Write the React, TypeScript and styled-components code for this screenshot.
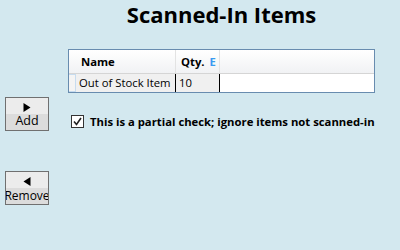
import React from "react";
import styled, { createGlobalStyle } from "styled-components";

const Global = createGlobalStyle`
  html, body { margin: 0; padding: 0; }
  body {
    background: #d3e8ef;
    font-family: "Open Sans", "Noto Sans", sans-serif;
    color: #000;
    width: 400px;
    height: 250px;
    overflow: hidden;
  }
`;

const Page = styled.div`
  display: grid;
  grid-template-columns: 44px 307px;
  column-gap: 19px;
  padding-left: 5px;
  width: 400px;
  height: 250px;
  box-sizing: border-box;
`;

const ButtonColumn = styled.div`
  display: flex;
  flex-direction: column;
  padding-top: 97px;
  gap: 40px;
`;

const NavButton = styled.button`
  width: 44px;
  height: 34px;
  padding: 0;
  margin: 0;
  box-sizing: border-box;
  border: 1px solid #707070;
  background: linear-gradient(#ececec 0%, #ececec 50%, #dcdcdc 50%, #dcdcdc 100%);
  display: flex;
  flex-direction: column;
  align-items: center;
  justify-content: flex-start;
  overflow: hidden;
  font-family: "Open Sans", "Noto Sans", sans-serif;
  font-size: 12.5px;
  line-height: 15px;
  color: #000;
`;

const Arrow = styled.svg`
  display: block;
  margin-top: 5px;
  flex: none;
`;

const ButtonLabel = styled.span<{ $drop?: number; $size?: number }>`
  display: block;
  white-space: nowrap;
  margin-top: ${(p) => p.$drop ?? 1}px;
  font-size: ${(p) => p.$size ?? 12.5}px;
`;

const Main = styled.div`
  display: flex;
  flex-direction: column;
`;

const Title = styled.h1`
  margin: 0;
  font-size: 22px;
  line-height: 28px;
  font-weight: 700;
  text-align: center;
`;

const Grid = styled.div`
  margin-top: 21px;
  border: 1px solid #688caf;
  background: #fff;
  height: 44px;
  box-sizing: border-box;
`;

const HeaderRow = styled.div`
  display: grid;
  grid-template-columns: 7px 100px 44px 1fr;
  height: 24px;
  box-sizing: border-box;
  border-bottom: 1px solid #d5d5d5;
  background: linear-gradient(#ffffff, #f1f2f4);
`;

const HeaderCell = styled.div<{ $sep?: boolean }>`
  border-right: ${(p) => (p.$sep ? "1px solid #e3e3e3" : "none")};
  font-size: 11.3px;
  font-weight: 700;
  line-height: 23px;
  padding-left: 5px;
  white-space: nowrap;
  overflow: hidden;
`;

const SortMark = styled.span`
  color: #3a9af0;
  margin-left: 5px;
`;

const DataRow = styled.div`
  display: grid;
  grid-template-columns: 7px 100px 44px 1fr;
  height: 18px;
`;

const RowHeader = styled.div`
  background: #f4f4f4;
  border: 1px solid #c7dcef;
  border-left: none;
  box-sizing: border-box;
`;

const Cell = styled.div<{ $filled?: boolean }>`
  background: ${(p) => (p.$filled ? "#f0f0f0" : "#fff")};
  border-right: ${(p) => (p.$filled ? "1px solid #000" : "none")};
  font-size: 11.3px;
  line-height: 18px;
  padding-left: 3px;
  white-space: nowrap;
  overflow: hidden;
`;

const CheckRow = styled.label`
  display: flex;
  align-items: center;
  margin-top: 22px;
  padding-left: 3px;
  gap: 6px;
  font-size: 11.3px;
  font-weight: 700;
  line-height: 13px;
  white-space: nowrap;
`;

const CheckBox = styled.span`
  width: 13px;
  height: 13px;
  box-sizing: border-box;
  border: 1px solid #333;
  background: #fff;
  display: flex;
  align-items: center;
  justify-content: center;
  flex: none;
`;

export default function App() {
  return (
    <>
      <Global />
      <Page>
        <ButtonColumn>
          <NavButton>
            <Arrow width="8" height="9" viewBox="0 0 8 9">
              <path d="M0.5 0 L7.5 4.5 L0.5 9 Z" fill="#000" />
            </Arrow>
            <ButtonLabel>Add</ButtonLabel>
          </NavButton>
          <NavButton>
            <Arrow width="8" height="9" viewBox="0 0 8 9">
              <path d="M7.5 0 L0.5 4.5 L7.5 9 Z" fill="#000" />
            </Arrow>
            <ButtonLabel $drop={2} $size={12}>Remove</ButtonLabel>
          </NavButton>
        </ButtonColumn>
        <Main>
          <Title>Scanned-In Items</Title>
          <Grid>
            <HeaderRow>
              <HeaderCell />
              <HeaderCell $sep>Name</HeaderCell>
              <HeaderCell $sep>
                Qty.<SortMark>E</SortMark>
              </HeaderCell>
              <HeaderCell />
            </HeaderRow>
            <DataRow>
              <RowHeader />
              <Cell $filled>Out of Stock Item</Cell>
              <Cell $filled>10</Cell>
              <Cell />
            </DataRow>
          </Grid>
          <CheckRow>
            <CheckBox>
              <svg width="9" height="9" viewBox="0 0 9 9">
                <path d="M1 4.5 L3.5 7.5 L8 1" fill="none" stroke="#222" strokeWidth="1.6" />
              </svg>
            </CheckBox>
            This is a partial check; ignore items not scanned-in
          </CheckRow>
        </Main>
      </Page>
    </>
  );
}
